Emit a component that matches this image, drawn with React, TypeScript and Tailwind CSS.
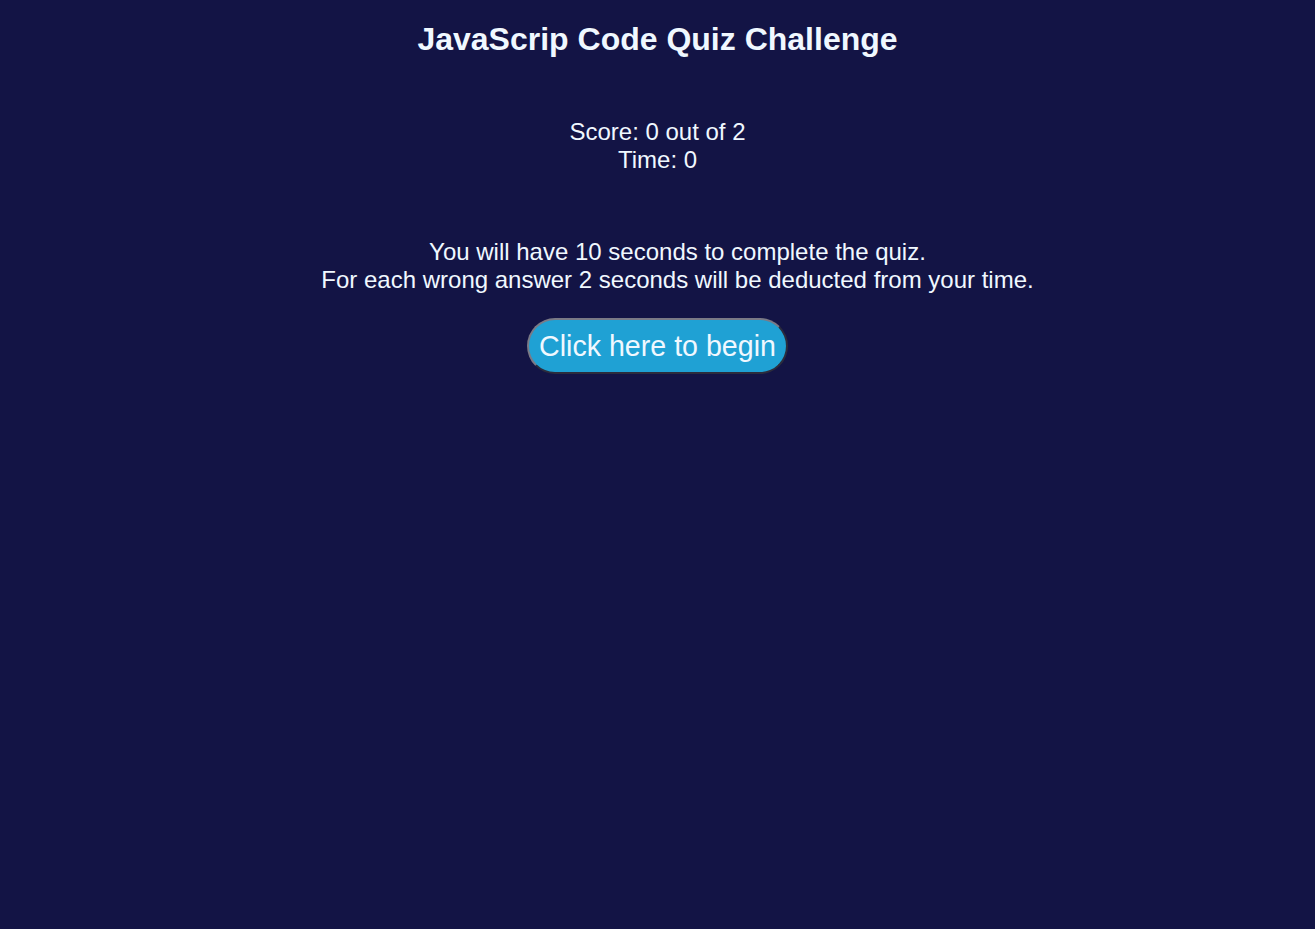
export default function App() {
  return (
    <div
      className="min-h-[929px] w-full bg-[#131445] text-[#f0f8ff] text-center"
      style={{ fontFamily: '"Liberation Sans", Arial, sans-serif' }}
    >
      <header className="pt-[21px]">
        <h1 className="text-[32px] font-bold leading-[37px]">JavaScrip Code Quiz Challenge</h1>
      </header>

      <section className="mt-[60px] text-[24px] leading-[28px]">
        <p>Score: 0 out of 2</p>
        <p>Time: 0</p>
      </section>

      <section className="mt-[64px] pl-10 text-[24px] leading-[28px]">
        <p>You will have 10 seconds to complete the quiz.</p>
        <p>For each wrong answer 2 seconds will be deducted from your time.</p>
      </section>

      <div className="mt-[24px] flex justify-center">
        <button className="h-[56px] rounded-full border-2 border-t-[#7a7a86] border-l-[#7a7a86] border-r-[#2c2c3c] border-b-[#2c2c3c] bg-[#1fa1d4] px-[10px] text-[28.6px] leading-[32px] text-[#f0f8ff]">
          Click here to begin
        </button>
      </div>
    </div>
  );
}
